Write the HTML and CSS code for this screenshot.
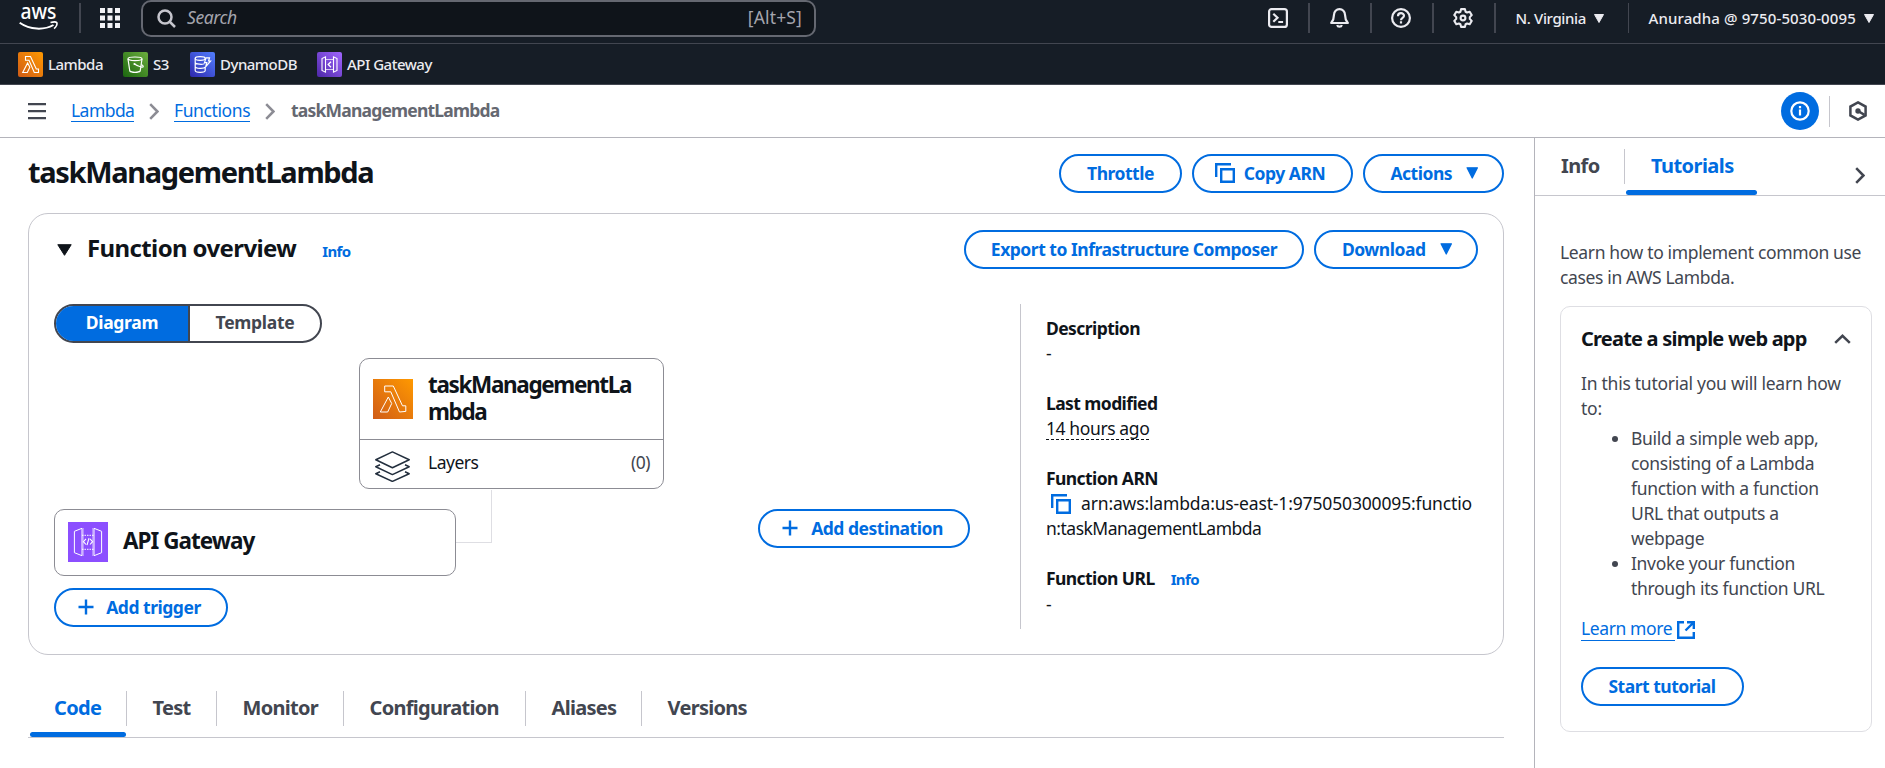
FILE: index.html
```html
<!DOCTYPE html>
<html lang="en">
<head>
<meta charset="utf-8">
<title>taskManagementLambda | Functions | Lambda</title>
<link rel="stylesheet" href="styles.css">
</head>
<body>
<svg class="defs" width="0" height="0">
  <defs>
    <linearGradient id="g-orange" x1="0" y1="1" x2="1" y2="0"><stop offset="0" stop-color="#d05c17"/><stop offset="1" stop-color="#f90"/></linearGradient>
    <linearGradient id="g-green" x1="0" y1="1" x2="1" y2="0"><stop offset="0" stop-color="#1b660f"/><stop offset="1" stop-color="#6cae3e"/></linearGradient>
    <linearGradient id="g-blue" x1="0" y1="1" x2="1" y2="0"><stop offset="0" stop-color="#2e27ad"/><stop offset="1" stop-color="#527fff"/></linearGradient>
    <linearGradient id="g-purple" x1="0" y1="1" x2="1" y2="0"><stop offset="0" stop-color="#4d27a8"/><stop offset="1" stop-color="#a166ff"/></linearGradient>
    <symbol id="lambda" viewBox="0 0 40 40"><path d="M11.7 7h8.6l9.2 19.8h3.3v5.6l-6.3.6-8.7-20.2h-6.1zM15.3 18l3.4 6.5-4 8.5H7.3z" fill="none" stroke="#fff" stroke-linejoin="round"/></symbol>
    <symbol id="copy" viewBox="0 0 20 20"><path d="M1.2 14V1.2H16M6.2 6.2h12.6v12.6H6.2z" fill="none" stroke="currentColor" stroke-width="2.4"/></symbol>
    <symbol id="plus" viewBox="0 0 16 16"><path d="M8 .5v15M.5 8h15" fill="none" stroke="currentColor" stroke-width="2.4"/></symbol>
    <symbol id="caret" viewBox="0 0 12 12"><path d="M.8.8h10.400L6 11z" fill="currentColor" stroke="currentColor" stroke-width="1.200" stroke-linejoin="round"/></symbol>
    <symbol id="chev" viewBox="0 0 10 17"><path d="M1.200 1.200l7.200 7.300-7.200 7.300" fill="none" stroke="currentColor" stroke-width="2.500"/></symbol>
  </defs>
</svg>

<header class="top">
  <svg class="logo" viewBox="0 0 39 26"><text x="1.500" y="14.300" textLength="36" lengthAdjust="spacingAndGlyphs">aws</text><path d="M.7 17.800C11 25 25 25.300 34.500 20" fill="none" stroke="#fff" stroke-width="2"/><path d="M31.500 17.600c3-.9 5.500-.8 6.300 0 .5 1.300-.5 4-2.700 6" fill="none" stroke="#fff" stroke-width="1.600"/></svg>
  <span class="sep"></span>
  <svg class="apps" viewBox="0 0 20 20" fill="#f3f3f7"><path d="M0 0h5v5H0zM7.500 0h5v5h-5zM15 0h5v5h-5zM0 7.500h5v5H0zM7.500 7.500h5v5h-5zM15 7.500h5v5h-5zM0 15h5v5H0zM7.500 15h5v5h-5zM15 15h5v5h-5z"/></svg>
  <div class="search">
    <svg width="20" height="20" viewBox="0 0 20 20" fill="none" stroke="#c6c6cd" stroke-width="2.500"><circle cx="8" cy="8" r="6.500"/><path d="M12.500 12.500l5.500 5.500"/></svg>
    <em>Search</em><span>[Alt+S]</span>
  </div>
  <nav class="tools">
    <div class="cell"><svg width="20" height="20" viewBox="0 0 20 20" fill="none" stroke="#ebebf0" stroke-width="2.200"><rect x="1.100" y="1.100" width="17.800" height="17.800" rx="2.500"/><path d="M5.300 5.800l4.200 4-4.200 4M10.300 14h4.800"/></svg></div>
    <div class="cell c2"><svg width="19" height="20" viewBox="0 0 19 20" fill="none" stroke="#ebebf0" stroke-width="2.200" stroke-linejoin="round"><path d="M4 6.700a5.500 5.500 0 0 1 11 0c0 4.500 1 6 2.800 8.300H1.200C3 12.700 4 11.200 4 6.700zM7.200 17c.5 2.300 4.100 2.300 4.600 0"/></svg></div>
    <div class="cell c3"><svg width="20" height="20" viewBox="0 0 20 20" fill="none" stroke="#ebebf0" stroke-width="2.200"><circle cx="10" cy="10" r="8.900"/><path d="M7 8.200c0-4 6-3.800 6-.5 0 2.200-3 2-3 4.500M10 13.300v2.200"/></svg></div>
    <div class="cell c4"><svg width="20" height="20" viewBox="0 0 20 20" fill="none" stroke="#ebebf0" stroke-width="2.100" stroke-linejoin="round"><path d="M8.100 1.100h3.800l.7 2.600 1.500.8 2.600-.7 2 3.300-1.900 2v1.800l1.900 2-2 3.300-2.600-.7-1.500.8-.7 2.600H8.100l-.7-2.600-1.500-.8-2.600.7-2-3.300 1.900-2V9.100l-1.900-2 2-3.300 2.600.7 1.500-.8z"/><circle cx="10" cy="10" r="2.400"/></svg></div>
    <div class="cell region"><span>N. Virginia</span><svg width="10" height="9" viewBox="0 0 10 9"><path d="M.5.5h9L5 8.500z" fill="#ebebf0" stroke="#ebebf0" stroke-linejoin="round"/></svg></div>
    <div class="cell user"><span>Anuradha @ 9750-5030-0095</span><svg width="10" height="9" viewBox="0 0 10 9"><path d="M.5.5h9L5 8.500z" fill="#ebebf0" stroke="#ebebf0" stroke-linejoin="round"/></svg></div>
  </nav>
</header>

<nav class="favs">
  <a class="f1"><svg viewBox="0 0 25 25"><rect width="25" height="25" rx="2" fill="url(#g-orange)"/><path d="M7.500 4.500h5L18.300 17H20.500v3.500h-4.200L11 8.300H7.500zM9.600 11l2.200 4.200-2.500 5.300H4.700z" fill="none" stroke="#fff" stroke-width="1.100"/></svg><span>Lambda</span></a>
  <a class="f2"><svg viewBox="0 0 25 25"><rect width="25" height="25" rx="2" fill="url(#g-green)"/><g fill="none" stroke="#fff" stroke-width="1.200"><ellipse cx="12" cy="6.800" rx="7" ry="1.800"/><path d="M5 7l1.800 12c1.500 1.700 8.900 1.700 10.400 0L19 7M11.500 12c2.500 1.500 7 3.300 8.500 3 .8-.8-.5-2-2-2.800"/></g><circle cx="11.500" cy="12" r="1.100" fill="#fff"/></svg><span>S3</span></a>
  <a class="f3"><svg viewBox="0 0 25 25"><rect width="25" height="25" rx="2" fill="url(#g-blue)"/><g fill="none" stroke="#fff" stroke-width="1.200"><ellipse cx="10.200" cy="6.500" rx="5" ry="1.800"/><path d="M5.200 6.500V18.500c0 2.400 10 2.400 10 0V15M5.200 10.300c0 2.200 8 2.400 9.300 1.300M5.200 14.500c0 2.300 9 2.500 10 .5M15.200 7.500V6.500M16 5.800h3.500L18.600 9h2l-5 5.800 1.200-4.200h-2.300z"/></g></svg><span>DynamoDB</span></a>
  <a class="f4"><svg viewBox="0 0 25 25"><rect width="25" height="25" rx="2" fill="url(#g-purple)"/><g fill="none" stroke="#fff"><path d="M8.500 4.800v15.400L5 18.500v-12zM16.500 4.800v15.400l3.500-1.700v-12z" stroke-width="1.100"/><path d="M8.500 7.500h8M8.500 17.500h8" stroke-opacity=".7"/><path d="M14 9.800l-2.800 2.700 2.800 2.700" stroke-width="1.300"/></g></svg><span>API Gateway</span></a>
</nav>

<div class="crumbs">
  <svg class="burger" width="18" height="17" viewBox="0 0 18 17"><path d="M0 1.200h18M0 8.200h18M0 15.200h18" stroke="#424650" stroke-width="2.200"/></svg>
  <a class="c-lambda">Lambda</a>
  <svg class="chev" width="10" height="17"><use href="#chev"/></svg>
  <a class="c-fn">Functions</a>
  <svg class="chev second" width="10" height="17"><use href="#chev"/></svg>
  <b>taskManagementLambda</b>
  <div class="crumb-tools">
    <span class="info-btn"><svg width="20" height="20" viewBox="0 0 20 20" fill="none" stroke="#fff" stroke-width="2.200"><circle cx="10" cy="10" r="8.700"/><path d="M10 8.600v6M10 5v2.200"/></svg></span>
    <span class="vline"></span>
    <svg width="18" height="20" viewBox="0 0 18 20" fill="none" stroke="#424650" stroke-width="2.500"><path d="M9 1.400l7.600 4.200v8.800L9 18.600l-7.600-4.200V5.600z"/><circle cx="9" cy="10" r="2.700" fill="#424650" stroke="none"/><path d="M9 10l6.500 3.800"/></svg>
  </div>
</div>

<div class="page">
  <main>
    <div class="title">
      <h1>taskManagementLambda</h1>
      <button class="b-throttle">Throttle</button>
      <button class="b-copy"><svg width="20" height="20"><use href="#copy"/></svg>Copy ARN</button>
      <button class="b-actions">Actions<svg width="12.500" height="12"><use href="#caret"/></svg></button>
    </div>

    <section class="card">
      <div class="card-head">
        <svg width="15" height="12" viewBox="0 0 15 12"><path d="M.8.7h13.400L7.500 11.300z" fill="#0f141a" stroke="#0f141a" stroke-linejoin="round"/></svg>
        <h2>Function overview</h2>
        <a class="info">Info</a>
        <button class="b-export">Export to Infrastructure Composer</button>
        <button class="b-download">Download<svg width="12.500" height="12"><use href="#caret"/></svg></button>
      </div>
      <div class="card-body">
        <div class="left">
          <div class="segment"><span class="on">Diagram</span><span class="off">Template</span></div>
          <div class="canvas">
            <div class="wire"></div>
            <div class="node fn">
              <div class="fn-top">
                <svg width="40" height="40" viewBox="0 0 40 40"><rect width="40" height="40" fill="url(#g-orange)"/><use href="#lambda"/></svg>
                <h3>taskManagementLa<br>mbda</h3>
              </div>
              <div class="fn-layers">
                <svg width="35" height="31" viewBox="0 0 35 31" fill="none" stroke="#232f3e" stroke-width="1.500" stroke-linejoin="round"><path d="M17.400.9l16.800 7.900-16.800 7.900L.8 8.800zM5 13.700l-4.200 2 16.600 7.900 16.800-7.900-4.200-2M5 20.700l-4.200 2 16.600 7.700 16.800-7.700-4.200-2"/></svg>
                <span>Layers</span><span class="count">(0)</span>
              </div>
            </div>
            <div class="node api">
              <svg width="40" height="40" viewBox="0 0 40 40"><rect width="40" height="40" fill="#8c4fff"/><g fill="none" stroke="#fff"><path d="M6.400 9.300L14 6.300v27.400l-7.600-3zM33.600 9.300L26 6.300v27.400l7.600-3z"/><path d="M15.200 6v28M24.800 6v28" stroke-opacity=".5"/><path d="M14 13.300h12M14 27.300h12" stroke-dasharray="1.500 1"/><path d="M18 16.800l-2.600 2.900 2.600 2.800M22 16.800l2.600 2.900-2.600 2.800M21 16.200l-2 7" stroke-width="1.100"/></g></svg>
              <h3>API Gateway</h3>
            </div>
            <button class="b-trigger"><svg width="16" height="16"><use href="#plus"/></svg>Add trigger</button>
            <button class="b-dest"><svg width="16" height="16"><use href="#plus"/></svg>Add destination</button>
          </div>
        </div>
        <dl class="details">
          <dt>Description</dt><dd>-</dd>
          <dt>Last modified</dt><dd><span class="dashed">14 hours ago</span></dd>
          <dt class="d-arn">Function ARN</dt><dd><svg class="copy" width="20" height="20"><use href="#copy"/></svg><span class="arn">arn:aws:lambda:us-east-1:975050300095:functio</span><br><span class="arn2">n:taskManagementLambda</span></dd>
          <dt>Function URL<a class="info">Info</a></dt><dd>-</dd>
        </dl>
      </div>
    </section>

    <div class="tabs">
      <span class="t-code active">Code</span><span class="t-test">Test</span><span class="t-mon">Monitor</span><span class="t-conf">Configuration</span><span class="t-alias">Aliases</span><span class="t-ver">Versions</span>
    </div>
  </main>

  <aside>
    <div class="side-tabs">
      <span class="s-info">Info</span><span class="s-tut">Tutorials</span>
      <svg width="10" height="17"><use href="#chev"/></svg>
    </div>
    <p class="lead">Learn how to implement common use<br>cases in AWS Lambda.</p>
    <div class="tut">
      <div class="tut-head"><h4>Create a simple web app</h4><svg width="17" height="10" viewBox="0 0 17 10"><path d="M1.200 8.800l7.300-7 7.300 7" fill="none" stroke="#424650" stroke-width="2.500"/></svg></div>
      <p>In this tutorial you will learn how<br>to:</p>
      <ul>
        <li>Build a simple web app,<br>consisting of a Lambda<br>function with a function<br>URL that outputs a<br>webpage</li>
        <li>Invoke your function<br>through its function URL</li>
      </ul>
      <a class="more"><span>Learn more</span><svg width="18" height="18" viewBox="0 0 18 18" fill="none" stroke="currentColor" stroke-width="2.400"><path d="M7 1.200H1.200v15.600h15.600V11M10 1.200h6.800V8M16.500 1.500L8.500 9.500"/></svg></a>
      <button class="b-start">Start tutorial</button>
    </div>
  </aside>
</div>
</body>
</html>
```
FILE: styles.css
```css
* { box-sizing: border-box; }
html, body { margin: 0; height: 768px; overflow: hidden; }
body {
  background: #fff;
  color: #0f141a;
  font: 400 17.5px/25px "Noto Sans", "Open Sans", sans-serif;
  letter-spacing: -0.3px;
}
.defs { position: absolute; }
svg { display: block; flex: none; }
h1, h2, h3, h4, p, ul, dl, dd { margin: 0; padding: 0; }
span, a, h1, h2, h3, h4, b, em, button { white-space: nowrap; }

/* global header */
.top {
  display: flex;
  align-items: center;
  height: 44px;
  padding: 0 0 7px 19px;
  background: #161d26;
  border-bottom: 1px solid #424650;
  color: #ebebf0;
}
.logo { width: 39px; height: 26px; margin-top: -1px; overflow: visible; }
.logo text { font-family: "Noto Sans", sans-serif; font-size: 22px; font-weight: 500; fill: #fff; letter-spacing: 0; }
.sep { width: 2px; height: 30px; margin-left: 21px; background: #424650; }
.apps { width: 20px; height: 20px; margin-left: 19px; }
.search {
  display: flex;
  align-items: center;
  align-self: flex-start;
  width: 675px;
  height: 37px;
  margin-left: 21px;
  padding: 0 12px 0 14px;
  border: 2px solid #656871;
  border-radius: 10px;
  background: #0f141a;
  color: #a4a4ad;
}
.search em { margin: -2px 0 0 10px; font-size: 17.5px; letter-spacing: -0.4px; line-height: 33px; }
.search span { margin: -2px 0 0 auto; letter-spacing: 0.15px; }
.tools { display: flex; margin-left: auto; font-size: 15px; font-weight: 500; }
.cell { display: flex; align-items: center; justify-content: center; width: 60px; height: 30px; }
.cell + .cell { border-left: 2px solid #424650; }
.c2 { width: 62px; }
.c3 { width: 61.5px; }
.c4 { width: 62px; }
.c2, .c3, .c4 { padding-right: 2px; }
.cell.region, .cell.user { justify-content: flex-start; padding-left: 20px; gap: 8px; }
.cell.region { width: 134px; letter-spacing: -0.36px; }
.cell.user { width: 257.5px; border-left-width: 1px; letter-spacing: 0.12px; }

/* favourites bar */
.favs {
  display: flex;
  align-items: center;
  height: 41px;
  padding-left: 18px;
  background: #161d26;
  border-bottom: 1px solid #424650;
  color: #ebebf0;
  font-size: 15px;
  font-weight: 500;
  letter-spacing: -0.5px;
}
.favs a { display: flex; align-items: center; gap: 5px; }
.favs svg { width: 25px; height: 25px; }
.f1 { width: 105px; }
.f2 { width: 67px; }
.f3 { width: 127px; }

/* breadcrumbs */
.crumbs {
  display: flex;
  align-items: center;
  height: 53px;
  padding-left: 28px;
  border-bottom: 1px solid #b4b4bb;
}
.crumbs > a { height: 23px; line-height: 23px; border-bottom: 1px solid #006ce0; color: #006ce0; }
.c-lambda { width: 63px; margin: -2px 0 0 25px; letter-spacing: -0.55px; }
.c-fn { width: 76px; margin: -2px 0 0 15px; letter-spacing: -0.4px; }
.chev { margin-left: 15px; color: #8c8c94; }
.crumbs b { margin: -1px 0 0 16px; color: #656871; font-weight: 700; letter-spacing: -0.8px; }
.crumb-tools { display: flex; align-items: center; margin-left: auto; margin-right: 18px; }
.info-btn { display: flex; align-items: center; justify-content: center; width: 38px; height: 38px; border-radius: 50%; background: #006ce0; }
.vline { width: 1px; height: 31px; margin: 0 19px 0 10px; background: #c6c6cd; }

.page { display: flex; height: 630px; }
main { width: 1534px; padding: 16px 30px 0 28px; }

/* buttons */
button {
  display: flex;
  align-items: center;
  justify-content: center;
  height: 39px;
  padding: 0 0 1px;
  border: 2.5px solid #006ce0;
  border-radius: 20px;
  background: #fff;
  color: #006ce0;
  font: 700 17.5px/25px "Noto Sans", "Open Sans", sans-serif;
  letter-spacing: -0.48px;
}
.title { display: flex; gap: 10px; }
h1 { margin-right: auto; font-size: 29px; font-weight: 700; line-height: 36px; letter-spacing: -1.33px; }
.b-throttle { width: 123px; }
.b-copy { width: 161px; padding-right: 5px; gap: 9px; }
.b-actions, .b-download { gap: 14px; padding-left: 2px; }
.b-actions { width: 141px; }

/* overview card */
.card { height: 442px; margin-top: 20px; padding: 16px 25px 0; border: 1px solid #c6c6cd; border-radius: 20px; }
.card-head { display: flex; align-items: center; gap: 10px; height: 39px; padding-left: 3px; }
.card-head h2 { margin-left: 5px; margin-top: -3px; font-size: 24px; font-weight: 700; line-height: 30px; letter-spacing: -0.62px; }
.info { color: #006ce0; font-size: 15px; font-weight: 700; letter-spacing: -0.6px; }
.card-head .info { margin: 4px auto 0 16px; }
.b-export { width: 340px; }
.b-download { width: 164px; }
.card-body { display: flex; height: 325px; margin-top: 35px; }
.left { width: 966px; }
.segment { display: flex; width: 268px; height: 39px; border: 2px solid #424650; border-radius: 20px; overflow: hidden; font-weight: 700; line-height: 33px; text-align: center; letter-spacing: -0.3px; }
.on { width: 134px; border-right: 2px solid #424650; background: #006ce0; color: #fff; }
.off { flex: 1; color: #424650; }

/* diagram canvas */
.canvas { position: relative; height: 270px; margin-top: 15px; }
.node { position: absolute; border: 1px solid #8c8c94; border-radius: 10px; background: #fff; }
.node h3 { font-size: 22.5px; font-weight: 700; line-height: 27px; letter-spacing: -1.36px; }
.fn { left: 305px; top: 0; width: 305px; height: 131px; }
.fn-top { display: flex; gap: 15px; height: 81px; padding: 20px 0 0 13px; border-bottom: 1px solid #8c8c94; }
.fn-top h3 { margin-top: -8px; }
.fn-layers { display: flex; padding: 11px 13px 0 15px; }
.fn-layers span { margin: -1px 0 0 18px; letter-spacing: -0.5px; }
.fn-layers .count { margin-left: auto; color: #424650; }
.api { display: flex; gap: 15px; left: 0; top: 151px; width: 402px; height: 67px; padding: 12px 13px; }
.api h3 { margin-top: 5px; letter-spacing: -1px; }
.wire { position: absolute; left: 402px; top: 132px; width: 36px; height: 53px; border: solid #dedee3; border-width: 0 1px 1px 0; }
.b-trigger { position: absolute; left: 0; top: 230px; width: 174px; padding-right: 3px; gap: 12px; }
.b-dest { position: absolute; left: 704px; top: 151px; width: 212px; padding-right: 3px; gap: 13px; }

.details { padding: 12px 0 0 25px; border-left: 1px solid #c6c6cd; }
.details dt { font-weight: 700; letter-spacing: -0.58px; }
.details dd { margin-bottom: 25px; line-height: 25px; }
.details .info { margin-left: 16px; }
.dashed { display: inline-block; height: 24px; border-bottom: 1px dashed #0f141a; letter-spacing: -0.4px; }
.copy { display: inline-block; margin: 0 10px 0 5px; vertical-align: -4px; color: #006ce0; }
.arn { letter-spacing: -0.15px; }
.arn2 { letter-spacing: -0.5px; }

/* tabs */
.tabs { display: flex; height: 47px; margin-top: 36px; border-bottom: 1px solid #c6c6cd; color: #424650; font-size: 20px; font-weight: 700; line-height: 34px; letter-spacing: -0.7px; }
.tabs span { position: relative; height: 35px; padding-left: 26px; }
.tabs span + span { padding-left: 25.5px; border-left: 1px solid #c6c6cd; }
.t-code { width: 98px; }
.t-test { width: 90px; }
.t-mon { width: 127px; }
.t-conf { width: 182px; }
.t-alias { width: 116px; }
.tabs .active, .s-tut { color: #006ce0; }
.active::after { content: ""; position: absolute; left: 2px; top: 41px; width: 96px; height: 5px; border-radius: 3px; background: #006ce0; }

/* help panel */
aside { flex: 1; border-left: 1px solid #b4b4bb; color: #424650; }
.side-tabs { display: flex; height: 58px; padding-top: 11px; border-bottom: 1px solid #c6c6cd; font-size: 20px; font-weight: 700; line-height: 34px; letter-spacing: -0.6px; }
.s-info { width: 90px; height: 35px; padding-left: 26px; border-right: 1px solid #c6c6cd; }
.s-tut { position: relative; padding-left: 26px; width: 230px; letter-spacing: -0.55px; }
.s-tut::after { content: ""; position: absolute; left: 1px; top: 41px; width: 131px; height: 5px; border-radius: 3px; background: #006ce0; }
.side-tabs svg { margin-top: 18px; }
.lead { padding: 44px 0 0 25px; letter-spacing: -0.36px; }
.tut { width: 312px; height: 426px; margin: 16px 0 0 25px; padding: 19px 20px 0; border: 1px solid #dedee3; border-radius: 10px; letter-spacing: -0.26px; }
.tut-head { display: flex; align-items: center; justify-content: space-between; height: 25px; margin-bottom: 20px; }
.tut h4 { color: #0f141a; font-size: 20px; font-weight: 700; letter-spacing: -0.79px; }
.tut ul { margin-top: 5px; padding-left: 50px; }
.tut li { letter-spacing: -0.32px; }
.more { display: flex; align-items: flex-start; gap: 2px; margin-top: 15px; color: #006ce0; }
.more span { width: 94px; height: 25px; border-bottom: 1px solid #006ce0; letter-spacing: -0.4px; }
.more svg { margin-top: 5px; }
.b-start { width: 163px; margin-top: 26px; padding-right: 1px; }
```
